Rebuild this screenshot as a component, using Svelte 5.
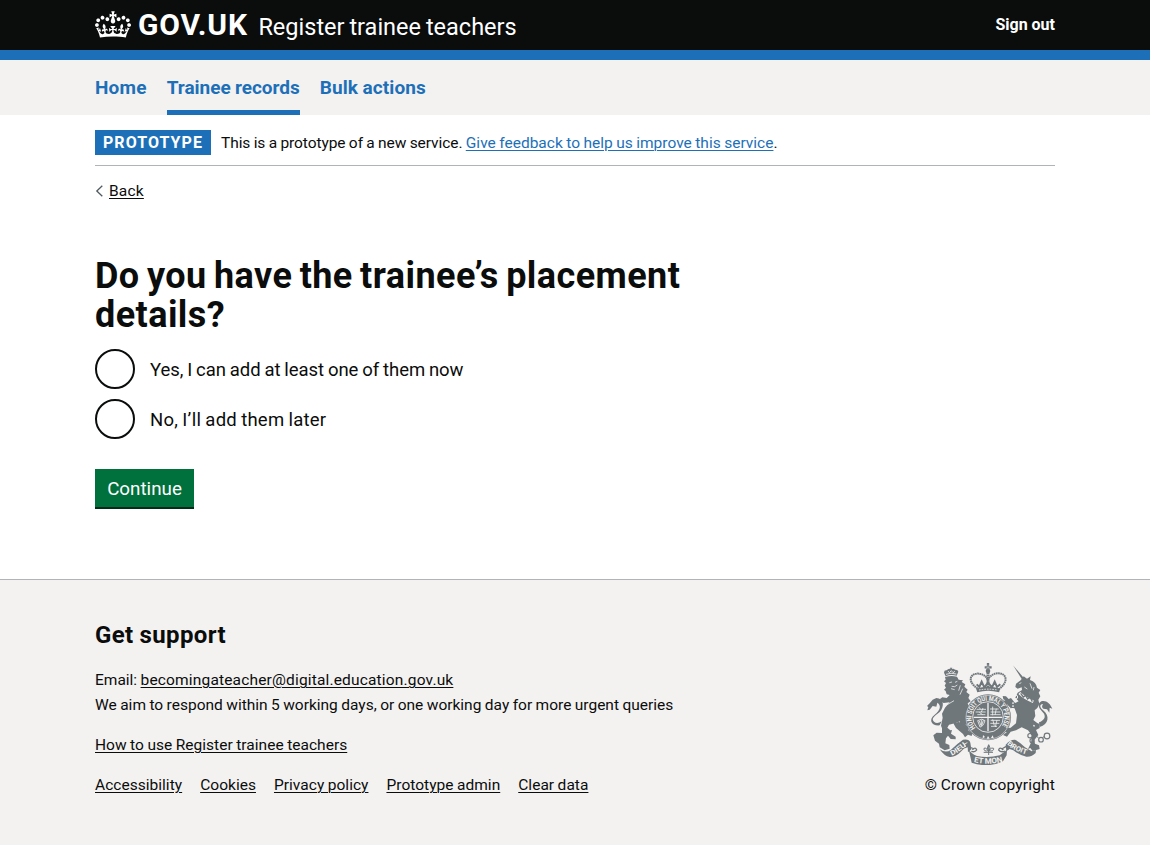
<script>
  const nav = [
    { label: 'Home' },
    { label: 'Trainee records', current: true },
    { label: 'Bulk actions' },
  ];
  const options = [
    { id: 'yes', label: 'Yes, I can add at least one of them now' },
    { id: 'later', label: 'No, I’ll add them later' },
  ];
  const links = ['Accessibility', 'Cookies', 'Privacy policy', 'Prototype admin', 'Clear data'];
</script>

<header class="header">
  <div class="container header-row">
    <a class="brand" href="#home">
      <svg class="crown" viewBox="0 0 132 97" width="36" height="27" aria-hidden="true">
        <path fill="currentColor" d="M25 30.2c3.5 1.5 7.7-.2 9.1-3.7 1.5-3.6-.2-7.8-3.9-9.2-3.6-1.4-7.6.3-9.1 3.9-1.4 3.5.3 7.5 3.9 9zM9 39.5c3.6 1.5 7.8-.2 9.2-3.7 1.5-3.6-.2-7.8-3.9-9.1-3.6-1.5-7.6.2-9.1 3.8-1.4 3.5.3 7.5 3.8 9zM4.4 57.2c3.5 1.5 7.7-.2 9.1-3.8 1.5-3.6-.2-7.7-3.9-9.1-3.5-1.5-7.6.3-9.1 3.8-1.4 3.5.3 7.6 3.9 9.1zm38.3-21.4c3.5 1.5 7.7-.2 9.1-3.8 1.5-3.6-.2-7.7-3.9-9.1-3.6-1.5-7.6.3-9.1 3.8-1.3 3.6.4 7.7 3.9 9.1zm64.4-5.6c-3.6 1.5-7.8-.2-9.1-3.7-1.5-3.6.2-7.8 3.8-9.2 3.6-1.4 7.7.3 9.2 3.9 1.3 3.5-.4 7.5-3.9 9zm15.9 9.3c-3.6 1.5-7.7-.2-9.1-3.7-1.5-3.6.2-7.8 3.7-9.1 3.6-1.5 7.7.2 9.2 3.8 1.5 3.5-.3 7.5-3.8 9zm4.7 17.7c-3.6 1.5-7.8-.2-9.2-3.8-1.5-3.6.2-7.7 3.9-9.1 3.6-1.5 7.7.3 9.2 3.8 1.3 3.5-.4 7.6-3.9 9.1zM89.3 35.8c-3.6 1.5-7.8-.2-9.2-3.8-1.4-3.6.2-7.7 3.9-9.1 3.6-1.5 7.7.3 9.2 3.8 1.4 3.6-.3 7.7-3.9 9.1zM69.7 17.7l8.9 4.7V9.3l-8.9 2.8c-.2-.3-.5-.6-.9-.9L72.4 0H59.6l3.5 11.2c-.3.3-.6.5-.9.9l-8.8-2.8v13.1l8.8-4.7c.3.3.6.7.9.9l-5 15.4v.1c-.2.8-.4 1.6-.4 2.4 0 4.1 3.1 7.5 7 8.1h.2c.3 0 .7.1 1 .1.4 0 .7 0 1-.1h.2c4-.6 7.1-4.1 7.1-8.1 0-.8-.1-1.7-.4-2.4V34l-5.1-15.4c.4-.2.7-.6 1-.9zM66 92.8c16.9 0 32.8 1.1 47.1 3.2 4-16.9 8.9-26.7 14-33.5l-9.6-3.4c1 4.9 1.1 7.2 0 10.2-1.5-1.4-3-4.3-4.2-8.7L108.6 76c2.8-2 5-3.2 7.5-3.3-4.4 9.4-10 11.9-13.6 11.2-4.3-.8-6.3-4.6-5.6-7.9 1-4.7 5.7-5.9 8-.5 4.3-8.7-3-11.4-7.6-8.8 7.1-7.2 7.9-13.5 2.1-21.1-8 6.1-8.1 12.3-4.5 20.8-4.7-5.4-12.1-2.5-9.5 6.2 3.4-5.2 7.9-2 7.2 3.1-.6 4.3-6.4 7.8-13.5 7.2-10.3-.9-10.9-8-11.2-13.8 2.5-.5 7.1 1.8 11 7.3L80.2 60c-4.1 4.4-8 5.3-12.3 5.4 1.4-4.4 8-11.6 8-11.6H55.5s6.4 7.2 7.9 11.6c-4.2-.1-8-1-12.3-5.4l1.4 16.4c3.9-5.5 8.5-7.7 10.9-7.3-.3 5.8-.9 12.8-11.1 13.8-7.2.6-12.9-2.9-13.5-7.2-.7-5 3.8-8.3 7.1-3.1 2.7-8.7-4.6-11.6-9.4-6.2 3.7-8.5 3.6-14.7-4.6-20.8-5.8 7.6-5 13.9 2.2 21.1-4.7-2.6-11.9.1-7.7 8.8 2.3-5.5 7.1-4.2 8.1.5.7 3.3-1.3 7.1-5.7 7.9-3.5.7-9-1.8-13.5-11.2 2.5.1 4.7 1.3 7.5 3.3l-4.7-15.4c-1.2 4.4-2.7 7.2-4.3 8.7-1.1-3-.9-5.3 0-10.2l-9.5 3.4c5 6.9 9.9 16.7 14 33.5 14.8-2.1 30.8-3.2 47.7-3.2z" />
      </svg>
      <span class="wordmark">GOV.UK</span>
      <span class="product">Register trainee teachers</span>
    </a>
    <a class="sign-out" href="#sign-out">Sign out</a>
  </div>
</header>

<nav class="nav">
  <div class="container nav-row">
    {#each nav as item}
      <a href="#nav" class:current={item.current}>{item.label}</a>
    {/each}
  </div>
</nav>

<div class="container">
  <div class="phase">
    <strong class="tag">PROTOTYPE</strong>
    <span class="phase-text">This is a prototype of a new service. <a href="#feedback">Give feedback to help us improve this service</a>.</span>
  </div>
  <a class="back" href="#back">
    <svg width="8" height="12" viewBox="0 0 8 12" aria-hidden="true"><path d="M7.300 .8 1.800 6 7.300 11.200" fill="none" stroke="#505a5f" stroke-width="1.300" /></svg>
    <span>Back</span>
  </a>

  <main>
    <h1>Do you have the trainee’s placement details?</h1>
    <div class="radios">
      {#each options as option}
        <label class={option.id}>
          <input type="radio" name="placement" value={option.id} />
          <span>{option.label}</span>
        </label>
      {/each}
    </div>
    <button type="button">Continue</button>
  </main>
</div>

<footer>
  <div class="container footer-row">
    <div class="support">
      <h2>Get support</h2>
      <p>Email: <a class="email" href="#email">becomingateacher@digital.education.gov.uk</a><br />We aim to respond within 5 working days, or one working day for more urgent queries</p>
      <p><a class="guide" href="#guide">How to use Register trainee teachers</a></p>
      <div class="links">
        {#each links as link}<a href="#link">{link}</a>{/each}
      </div>
    </div>
    <div class="copyright">
      <svg class="crest" viewBox="35 21 378 309" width="126" height="103" aria-hidden="true">
        <g fill="#6f777b" stroke="none">
          <!-- lion -->
          <path d="M89 66 Q107 60 125 65 L130 74 143 76 139 81 150 88 147 95 157 104 153 111 163 119 159 129 166 139 157 145 161 156 160 190 151 210 160 215 159 225 136 228 133 214 134 199 Q119 207 101 209 L96 218 105 226 110 225 107 236 121 245 121 253 106 252 98 242 92 250 90 265 102 270 103 281 88 286 73 277 71 266 59 257 54 241 64 233 80 234 80 220 77 212 82 188 80 176 89 158 103 142 85 144 75 139 74 132 81 127 94 129 103 120 94 118 91 108 86 104 92 98 88 92 92 84 86 79 91 74Z" />
          <path d="M132 200 Q139 215 157 224 L171 235 169 243 158 239 149 247 143 237 122 219 114 205Z" />
          <path d="M73 211 C47 213 39 193 58 179 C76 165 78 151 66 143 L63 155 52 153 43 164 36 166 39 156 35 153 43 145 52 134 63 129 C86 130 88 155 73 171 C58 184 46 190 56 200 Q65 208 79 199Z" />
          <!-- crown on the lion -->
          <path d="M91 64 86 53 Q86 45 94 46 Q99 40 105 42 L104 38H111L109 42 Q115 39 119 44 Q128 43 129 50 L124 62 Q106 57 91 64Z" />
          <!-- unicorn -->
          <path d="M293 31 330 74 323 78Z" />
          <path d="M325 64 335 71 346 64 344 75 Q363 82 365 98 L375 105 370 113 375 124 369 134 372 146 366 159 358 166 360 183 354 195 Q365 205 373 207 L373 219 362 225 369 240 357 255 359 266 371 271 373 282 352 288 345 279 338 282 347 263 350 242 338 226 319 217 302 226 286 230 275 245 263 240 274 232 263 226 272 220 286 218 302 205 305 180 298 160 285 158 277 150 274 138 264 133 262 123 272 124 280 132 287 129 299 144 310 139 300 128 307 113 320 105 319 97 307 101 300 96 302 86 316 76Z" />
          <path d="M371 202 C385 196 392 188 386 176 C372 162 362 148 378 139 C391 134 405 145 411 161 L403 158 402 173 395 163 384 161 Q377 156 383 147 C371 148 373 158 385 167 C403 182 401 207 373 216Z" />
          <path d="M294 141 277 132 265 138 272 148 289 150 285 160 297 158 306 170 316 158Z" />
          <!-- shield and garter -->
          <circle cx="218" cy="187" r="69" />
          <!-- ribbon -->
          <path d="M73 283 Q92 296 107 284 Q124 267 143 254 Q162 251 165 263 L168 283 158 292 157 277 Q145 279 138 289 Q120 308 103 306 Q87 304 73 283Z" />
          <path d="M271 269 Q285 253 299 254 Q315 262 329 277 L349 289 362 285 361 294 Q350 306 333 305 Q312 300 294 286 L283 282 273 289Z" />
          <path d="M160 283 Q166 296 185 303 Q218 310 253 301 L275 285 274 301 263 319 Q218 340 169 323Z" />
        </g>
        <g fill="none" stroke="#6f777b">
          <path d="M177 282 162 276M259 282 277 272M171 284 Q181 274 184 285 Q179 293 168 289M264 285 Q253 274 250 285 Q257 294 270 288" stroke-width="4" />
          <path d="M220 270V300M205 292H233M220 269 Q212 278 220 290 Q228 278 220 269M219 287 Q205 291 206 280 Q211 275 217 286M221 287 Q235 291 235 280 Q228 275 222 286" stroke-width="3" />
          <circle cx="344" cy="242" r="6.500" stroke-width="3.500" />
          <circle cx="350" cy="257" r="6" stroke-width="3.500" />
          <circle cx="377" cy="254" r="7" stroke-width="3.500" />
          <circle cx="395" cy="243" r="8.500" stroke-width="3.500" />
          <path d="M363 243 370 249M382 247 387 245" stroke-width="3" />
        </g>
        <!-- imperial crown -->
        <g fill="none" stroke="#6f777b">
          <path d="M187 101 C148 74 170 48 200 58 Q212 62 217 75 Q225 61 239 56 C270 49 286 76 251 102" stroke-width="6" stroke-dasharray="5 1.500" />
          <path d="M218 53V101" stroke-width="9" stroke-dasharray="5 1.500" />
          <path d="M218 24V54M208 37H229" stroke-width="7" />
          <path d="M184 88 192 96 199 80 207 97 218 83 230 97 238 80 245 96 255 88" stroke-width="6" />
          <path d="M184 106 Q218 96 253 106" stroke-width="12" />
        </g>
        <circle cx="218" cy="48" r="7" fill="#6f777b" />
        <!-- light detail cut from the dark shapes -->
        <g fill="none" stroke="#f3f2f1">
          <circle cx="218" cy="187" r="66" stroke-width="1.600" />
          <circle cx="218" cy="186" r="46" stroke-width="2.500" />
          <path d="M218 143V229M175 187H261" stroke-width="4" />
          <path d="M184 163H212M181 171H211M186 179H210M224 162H250M226 171H255M225 179H256M226 196H254M225 205H252M227 214H245M191 157 196 163M203 159 198 171M192 172 202 179M232 155V181M243 161 239 180M232 193 237 212M245 195 240 216" stroke-width="2.400" />
          <path d="M187 197 Q201 188 209 197 Q203 216 194 216ZM192 198 197 212M198 195V212M204 196 199 212" stroke-width="2.500" />
          <path d="M191 105 Q218 100 247 105" stroke-width="2.500" stroke-dasharray="5 3" />
          <path d="M213 37H223M218 29V43" stroke-width="1.200" />
          <path d="M92 58 Q107 52 123 57M98 48 102 53 108 47 113 53 119 49" stroke-width="2.500" />
          <path d="M102 83 110 81M119 82 126 79M109 94 118 95 126 90M107 101 118 104M135 91 130 107M142 101 134 119M96 149 116 137" stroke-width="2.300" />
          <path d="M312 86 318 83M327 96 336 102M344 85 350 101M356 96 354 106" stroke-width="2.300" />
          <path d="M312 114 Q327 129 354 140" stroke-width="8" />
          <circle cx="301" cy="126" r="6" stroke-width="3" />
          <path d="M293 142V161M354 211 361 216M361 193 360 201" stroke-width="4" stroke-dasharray="5 4" />
          <path d="M156 263 147 267 151 276M282 263 290 269 285 278" stroke-width="2.500" />
        </g>
        <path d="M316 115 324 126 331 121 337 132 344 126 351 140" fill="none" stroke="#6f777b" stroke-width="4" />
        <g class="motto" fill="#f3f2f1">
          <path id="garter" d="M180.500 218.500 A49.500 49.500 0 1 1 255.500 218.500" fill="none" />
          <path id="dieu" d="M109 302 Q132 292 162 264" fill="none" />
          <path id="droit" d="M275 268 Q300 291 350 303" fill="none" />
          <path id="mon" d="M175 321 Q218 332 266 319" fill="none" />
          <text font-size="21"><textPath href="#garter" textLength="218" lengthAdjust="spacingAndGlyphs">HONI SOIT QUI MAL Y PENSE</textPath></text>
          <text font-size="21"><textPath href="#dieu" textLength="54" lengthAdjust="spacingAndGlyphs">DIEU</textPath></text>
          <text font-size="21"><textPath href="#droit" textLength="66" lengthAdjust="spacingAndGlyphs">DROIT</textPath></text>
          <text font-size="23"><textPath href="#mon" textLength="88" lengthAdjust="spacingAndGlyphs">ET MON</textPath></text>
          <path d="M203 240 209 246 202 250ZM218 243 223 251 214 251ZM232 241 235 249 227 249Z" />
        </g>
      </svg>
      <a href="#copyright">© Crown copyright</a>
    </div>
  </div>
</footer>

<style>
  :global(html) { background: #f3f2f1; }
  :global(body) { margin: 0; background: #fff; color: #0b0c0c; font: 400 15.500px/25px Roboto, sans-serif; word-spacing: -.4px; }
  a { color: inherit; }
  .container { width: 960px; margin: 0 auto; }

  .header { height: 50px; background: #0b0c0c; border-bottom: 10px solid #1d70b8; color: #fff; }
  .header a { text-decoration: none; }
  .header-row { display: flex; justify-content: space-between; }
  .brand { display: flex; align-items: flex-start; }
  .crown { margin-top: 11px; }
  .wordmark { margin-left: 7px; padding-top: 10px; font-size: 30px; line-height: 30px; font-weight: 700; letter-spacing: .85px; }
  .product { margin-left: 10.500px; padding-top: 12px; font-size: 23.500px; line-height: 30px; word-spacing: -1px; letter-spacing: .01px; }
  .sign-out { margin-top: 12px; font-size: 16px; font-weight: 700; letter-spacing: .05px; }

  .nav { background: #f3f2f1; }
  .nav-row { display: flex; gap: 20px; height: 55px; }
  .nav a { box-sizing: border-box; height: 55px; padding-top: 15px; border-bottom: 5px solid transparent; color: #1d70b8; font-size: 19px; font-weight: 700; text-decoration: none; letter-spacing: .1px; }
  .nav a:first-child { letter-spacing: .2px; }
  .nav a.current { border-color: #1d70b8; letter-spacing: -.02px; }

  .phase { display: flex; align-items: flex-start; height: 25px; padding: 15px 0 10px; border-bottom: 1px solid #b1b4b6; }
  .tag { padding: 0 8px; background: #1d70b8; color: #fff; font-size: 16px; letter-spacing: 1.050px; }
  .phase-text { margin-left: 10px; padding-top: 1px; letter-spacing: -.07px; }
  .phase-text a { color: #1d70b8; letter-spacing: .01px; }
  .phase a, footer a { text-decoration-thickness: 1px; text-underline-offset: 2px; }

  .back { display: flex; align-items: center; gap: 6px; width: fit-content; height: 25px; margin-top: 12px; text-decoration: none; letter-spacing: .2px; }
  .back span { padding-top: 2px; text-decoration: underline; text-decoration-thickness: 1px; text-underline-offset: 2px; }

  main { padding-top: 54px; }
  h1 { width: 640px; margin: 0 0 14px; font-size: 36px; line-height: 39px; letter-spacing: .43px; word-spacing: -2px; }
  .radios { display: grid; gap: 10px; }
  label { display: flex; align-items: center; gap: 15px; height: 40px; font-size: 18.500px; word-spacing: -.7px; letter-spacing: -.04px; }
  label span { padding-top: 2px; }
  label.later { letter-spacing: .24px; }
  input { appearance: none; box-sizing: border-box; width: 40px; height: 40px; margin: 0; border: 2px solid #0b0c0c; border-radius: 50%; }
  button { display: block; width: 99px; height: 38px; margin: 30px 0 72px; padding: 2px 0 0; border: 0; background: #00703c; box-shadow: 0 2px 0 #002d18; color: #fff; font: 400 18.800px/36px Roboto, sans-serif; }

  footer { box-sizing: border-box; min-height: 266px; border-top: 1px solid #b1b4b6; background: #f3f2f1; }
  .footer-row { display: flex; justify-content: space-between; align-items: flex-end; padding-top: 40px; }
  h2 { margin: 0 0 18px; font-size: 24px; line-height: 30px; letter-spacing: .38px; }
  p { margin: 0 0 15px; letter-spacing: 0; }
  .email { letter-spacing: .165px; }
  .guide { letter-spacing: .03px; }
  .links { display: flex; gap: 18px; letter-spacing: .03px; }
  .copyright { display: flex; flex-direction: column; align-items: flex-end; letter-spacing: .16px; }
  .crest { margin: 0 2px 8px 0; }
  .motto { font-family: Roboto, sans-serif; font-weight: 700; letter-spacing: 0; }
  .copyright a { text-decoration: none; }
</style>
